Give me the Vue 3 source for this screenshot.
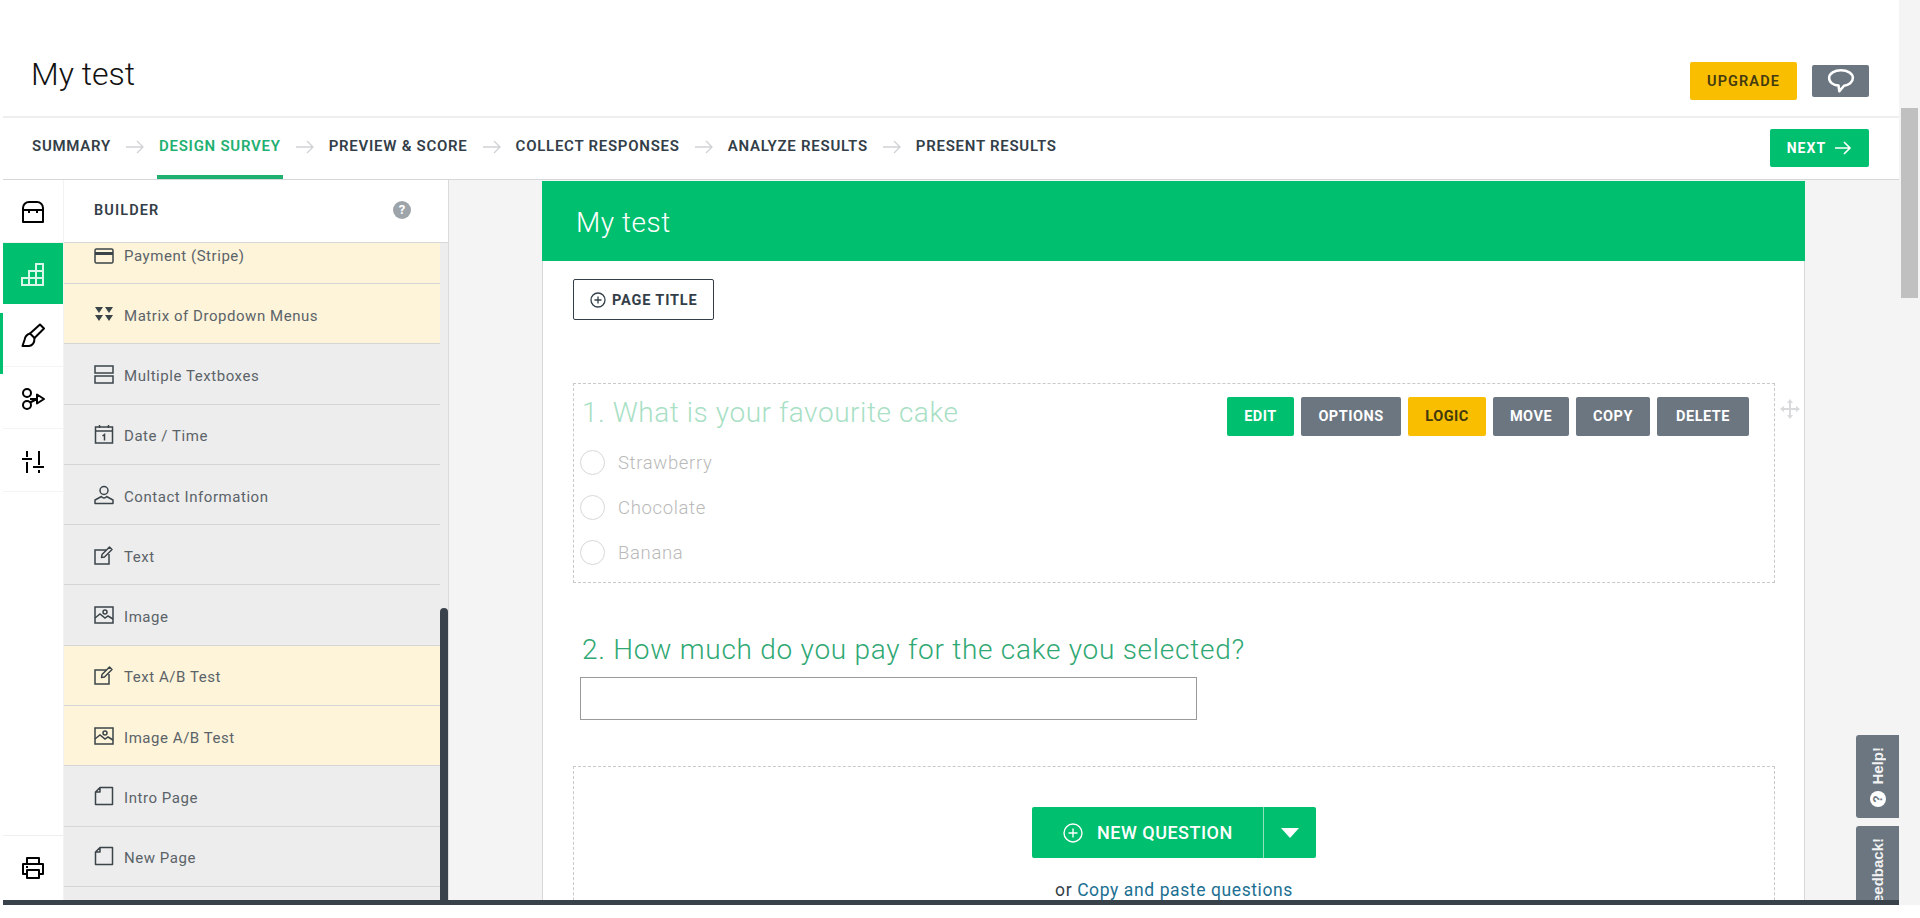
<script setup>
const rows = [
  { label: 'Payment (Stripe)', icon: 'card', paid: true, first: true },
  { label: 'Matrix of Dropdown Menus', icon: 'matrix', paid: true },
  { label: 'Multiple Textboxes', icon: 'boxes' },
  { label: 'Date / Time', icon: 'date' },
  { label: 'Contact Information', icon: 'contact' },
  { label: 'Text', icon: 'text' },
  { label: 'Image', icon: 'image' },
  { label: 'Text A/B Test', icon: 'text', paid: true },
  { label: 'Image A/B Test', icon: 'image', paid: true },
  { label: 'Intro Page', icon: 'page' },
  { label: 'New Page', icon: 'page' }
]
const steps = ['SUMMARY', 'DESIGN SURVEY', 'PREVIEW & SCORE', 'COLLECT RESPONSES', 'ANALYZE RESULTS', 'PRESENT RESULTS']
const actions = [
  { label: 'EDIT', kind: 'green', width: 67 },
  { label: 'OPTIONS', kind: 'grey', width: 100 },
  { label: 'LOGIC', kind: 'yellow', width: 78 },
  { label: 'MOVE', kind: 'grey', width: 76 },
  { label: 'COPY', kind: 'grey', width: 74 },
  { label: 'DELETE', kind: 'grey', width: 92 }
]
const answers = ['Strawberry', 'Chocolate', 'Banana']
</script>

<template>
  <div class="page">
    <div class="content">
      <header class="top">
        <h1>My test</h1>
        <div class="top-actions">
          <button class="upgrade">UPGRADE</button>
          <button class="chat">
            <svg width="28" height="26" viewBox="0 0 26 24" fill="none" stroke="#fff" stroke-width="2.400">
              <path d="M13 2c6 0 11 2.800 11 7.200 0 4-3.800 6.800-8.200 7.200L11.500 21.500l-.8-5.200C6 15.800 2 13.200 2 9.200 2 4.800 7 2 13 2z" stroke-linejoin="round" />
            </svg>
          </button>
        </div>
      </header>

      <nav class="steps">
        <template v-for="(step, i) in steps" :key="step">
          <svg v-if="i" class="step-arrow" width="20" height="14" viewBox="0 0 20 14" fill="none" stroke="#cfd2d3" stroke-width="1.300">
            <path d="M1 7h17M12 1l6 6-6 6" />
          </svg>
          <span class="step" :class="{ active: step === 'DESIGN SURVEY' }">{{ step }}</span>
        </template>
        <button class="next">
          NEXT
          <svg width="18" height="14" viewBox="0 0 18 14" fill="none" stroke="#fff" stroke-width="1.600">
            <path d="M1 7h15M10 1l6 6-6 6" />
          </svg>
        </button>
      </nav>

      <main class="main">
        <aside class="rail">
          <div class="rail-item first">
            <svg width="24" height="24" viewBox="0 0 24 24" fill="none" stroke="#000" stroke-width="2">
              <path d="M2 22V8a6 6 0 0 1 6-6h8a6 6 0 0 1 6 6v14zM2 10h20M8 10v3M16 10v3" stroke-linejoin="round" />
            </svg>
          </div>
          <div class="rail-item on">
            <svg width="24" height="24" viewBox="0 0 24 24" fill="none" stroke="#d9f7e8" stroke-width="2">
              <path d="M1 23v-7h7V9h7V2h7v21zM1 16h21M8 9h14M8 16v7M15 9v14" />
            </svg>
          </div>
          <div class="rail-item marked">
            <svg width="24" height="24" viewBox="0 0 24 24" fill="none" stroke="#000" stroke-width="2">
              <path d="M19 1.500 23 5.500 13.500 15 9 10.500z" stroke-linejoin="round" />
              <path d="M9 10.500C5 11.500 4 14 3.500 17L1.500 23H8c4-.5 5.500-4 5.500-8" stroke-linejoin="round" />
            </svg>
          </div>
          <div class="rail-item logic">
            <svg width="24" height="24" viewBox="0 0 24 24" fill="none" stroke="#000" stroke-width="2">
              <circle cx="6" cy="6" r="4" /><circle cx="6" cy="18" r="4" />
              <path d="M9 15.500 16 12H9M16 7.500v9l7-4.500z" stroke-linejoin="round" />
            </svg>
          </div>
          <div class="rail-item sliders">
            <svg width="24" height="24" viewBox="0 0 24 24" fill="none" stroke="#000" stroke-width="2">
              <path d="M6 1v6M6 12v11M18 1v14M18 20v3M1 9h10M12 17h11" />
            </svg>
          </div>
          <div class="rail-print">
            <svg width="24" height="24" viewBox="0 0 24 24" fill="none" stroke="#000" stroke-width="2">
              <path d="M6 8V2h12v6M6 18H2V8h20v10h-4M6 14h12v8H6z" stroke-linejoin="round" />
              <path d="M5 11h2" />
            </svg>
          </div>
        </aside>

        <section class="builder">
          <div class="builder-head">
            <span>BUILDER</span>
            <i class="hint">?</i>
          </div>
          <div class="builder-list">
            <div v-for="row in rows" :key="row.label" class="row" :class="{ paid: row.paid, first: row.first }">
              <svg class="row-icon" width="20" height="20" viewBox="0 0 20 20" fill="none" stroke="#3b4449" stroke-width="1.500">
                <template v-if="row.icon === 'card'">
                  <rect x="1" y="3" width="18" height="14" rx="1.500" /><path d="M1 7.500h18" stroke-width="3" />
                </template>
                <template v-else-if="row.icon === 'matrix'">
                  <path d="M1 3h8L5 9zM11 3h8l-4 6zM1 11h8l-4 6zM11 11h8l-4 6z" fill="#3b4449" stroke="none" />
                </template>
                <template v-else-if="row.icon === 'boxes'">
                  <rect x="1" y="2" width="18" height="7" /><rect x="1" y="12" width="18" height="7" />
                </template>
                <template v-else-if="row.icon === 'date'">
                  <rect x="1.500" y="3" width="17" height="16" /><path d="M1.500 7h17M5.500 1v3M14.500 1v3M8.500 12l2-1.500v6" />
                </template>
                <template v-else-if="row.icon === 'contact'">
                  <circle cx="10" cy="5.500" r="4" /><path d="M1 18.500h18V15l-6.500-3.500c-1 2-4 2-5 0L1 15z" stroke-linejoin="round" />
                </template>
                <template v-else-if="row.icon === 'text'">
                  <path d="M12 5H1v14h14V9" /><path d="m7.500 12.500.5-3L15.500 2l2.500 2.500L10.500 12z" stroke-linejoin="round" />
                </template>
                <template v-else-if="row.icon === 'image'">
                  <rect x="1" y="2" width="18" height="16" /><circle cx="11" cy="7" r="2" /><path d="m1 13 5-4 5 4 3-2 5 3" />
                </template>
                <template v-else>
                  <path d="M6 1.500h12.500v17h-17V6zM1.500 6H6V1.500" stroke-linejoin="round" />
                </template>
              </svg>
              <span>{{ row.label }}</span>
            </div>
          </div>
          <div class="builder-track"><div class="builder-thumb"></div></div>
        </section>

        <section class="stage">
          <div class="card">
            <div class="card-head">My test</div>
            <div class="card-body">
              <button class="page-title">
                <svg width="16" height="16" viewBox="0 0 16 16" fill="none" stroke="#333e48" stroke-width="1.300">
                  <circle cx="8" cy="8" r="7" /><path d="M8 4.500v7M4.500 8h7" />
                </svg>
                PAGE TITLE
              </button>

              <div class="q1">
                <div class="q1-top">
                  <h2>1. What is your favourite cake</h2>
                  <div class="q-actions">
                    <button v-for="a in actions" :key="a.label" class="act" :class="a.kind" :style="{ width: a.width + 'px' }">{{ a.label }}</button>
                  </div>
                </div>
                <label v-for="a in answers" :key="a" class="answer"><i></i>{{ a }}</label>
                <svg class="mover" width="20" height="20" viewBox="0 0 20 20" fill="#d8dadb">
                  <path d="M0 10l4-3v2h5V4H7l3-4 3 4h-2v5h5V7l4 3-4 3v-2h-5v5h2l-3 4-3-4h2v-5H4v2z" />
                </svg>
              </div>

              <div class="q2">
                <h2>2. How much do you pay for the cake you selected?</h2>
                <div class="q2-input"></div>
              </div>

              <div class="add-box">
                <div class="add-btn">
                  <span class="add-main">
                    <svg width="20" height="20" viewBox="0 0 20 20" fill="none" stroke="#fff" stroke-width="1.400">
                      <circle cx="10" cy="10" r="9" /><path d="M10 5.500v9M5.500 10h9" />
                    </svg>
                    NEW QUESTION
                  </span>
                  <span class="add-caret"><i></i></span>
                </div>
                <p class="paste">or <a>Copy and paste questions</a></p>
              </div>
            </div>
          </div>
        </section>
      </main>

      <div class="tab help"><span>Help!</span><i>?</i></div>
      <div class="tab feedback"><span>Feedback!</span></div>
      <div class="bar"></div>
    </div>
    <div class="scroll"><div class="scroll-thumb"></div></div>
  </div>
</template>

<style>
html, body { margin: 0; background: #fff; overflow: hidden; }
</style>

<style scoped>
.page {
  display: flex;
  width: 1920px;
  height: 918px;
  overflow: hidden;
  background: #fff;
  color: #333e48;
  font-family: Roboto, "Noto Sans", sans-serif;
}
.content {
  position: relative;
  width: 1899px;
  display: flex;
  flex-direction: column;
  padding-left: 3px;
  box-sizing: border-box;
  height: 905px;
}
button { font-family: inherit; border: 0; cursor: pointer; }

.top {
  height: 116px;
  flex: none;
  display: flex;
  justify-content: space-between;
  align-items: flex-start;
  border-bottom: 2px solid #eeeeee;
  margin-bottom: -1px;
}
.top h1 {
  margin: 52px 0 0 28px;
  font-size: 32px;
  line-height: 44px;
  font-weight: 300;
  color: #111;
}
.top-actions {
  display: flex;
  align-items: center;
  gap: 15px;
  margin: 62px 30px 0 0;
}
.upgrade {
  width: 107px;
  height: 38px;
  background: #f9be00;
  border-radius: 2px;
  font-size: 14.500px;
  font-weight: 600;
  letter-spacing: 1.100px;
  color: #433a10;
}
.chat {
  width: 57px;
  height: 32px;
  background: #6b7680;
  border-radius: 2px;
  padding: 0;
  display: flex;
  align-items: center;
  justify-content: center;
}

.steps {
  height: 63px;
  flex: none;
  display: flex;
  align-items: flex-start;
  border-bottom: 1px solid #d5d7d8;
  box-sizing: border-box;
  padding-left: 27px;
}
.step {
  padding: 19px 2px 19px;
  line-height: 20px;
  font-size: 15px;
  font-weight: 600;
  letter-spacing: 0.740px;
  color: #333e48;
  border-bottom: 4px solid transparent;
  white-space: nowrap;
}
.step.active { color: #1fb072; border-bottom-color: #1fb072; }
.step-arrow { margin: 23px 12px 0; flex: none; }
.next {
  margin: 12px 30px 0 auto;
  width: 99px;
  height: 38px;
  background: #00bf6f;
  border-radius: 2px;
  color: #fff;
  font-size: 14px;
  font-weight: 700;
  letter-spacing: 1.100px;
  display: flex;
  align-items: center;
  justify-content: center;
  gap: 8px;
}

.main {
  flex: 1;
  min-height: 0;
  display: flex;
  overflow: hidden;
  margin-left: -3px;
}

.rail {
  width: 63px;
  flex: none;
  display: flex;
  flex-direction: column;
  padding: 2px 0 0 3px;
  box-sizing: border-box;
}
.rail-item {
  height: 62px;
  flex: none;
  display: flex;
  align-items: center;
  justify-content: center;
  border-bottom: 1px solid #f4f4f4;
  box-sizing: border-box;
  position: relative;
}
.rail-item.first { height: 61px; }
.rail-item.on { height: 61px; background: #00bf6f; border-bottom: 0; }
.rail-item.marked { height: 63px; }
.rail-item.logic { padding-top: 2px; }
.rail-item.sliders { height: 63px; padding-top: 3px; }
.rail-item.marked::before {
  content: "";
  position: absolute;
  left: -3px;
  top: 9px;
  height: 61px;
  width: 3px;
  background: #00bf6f;
}
.rail-print {
  margin-top: auto;
  height: 65px;
  border-top: 1px solid #eeeeee;
  display: flex;
  align-items: center;
  justify-content: center;
  box-sizing: border-box;
}

.builder {
  width: 386px;
  flex: none;
  position: relative;
  display: flex;
  flex-direction: column;
  border-right: 1px solid #d8dadb;
  box-sizing: border-box;
  background: #ededed;
  overflow: hidden;
  border-left: 1px solid #f3f3f3;
}
.builder-head {
  height: 63px;
  flex: none;
  background: #fff;
  border-bottom: 1px solid #d5d7d8;
  box-sizing: border-box;
  display: flex;
  align-items: center;
  justify-content: space-between;
  padding: 0 37px 2px 30px;
  font-size: 14.500px;
  font-weight: 600;
  letter-spacing: 1.100px;
}
.hint {
  width: 18px;
  height: 18px;
  border-radius: 50%;
  background: #9da5ab;
  color: #fff;
  font-style: normal;
  font-size: 13px;
  font-weight: 700;
  text-align: center;
  line-height: 18px;
  letter-spacing: 0;
}
.builder-list { width: 376px; flex: 1; min-height: 0; overflow: hidden; }
.row {
  height: 60.300px;
  box-sizing: border-box;
  display: flex;
  align-items: center;
  gap: 10px;
  padding: 0 0 0 30px;
  border-bottom: 1px solid #d5d5d5;
  font-size: 15px;
  letter-spacing: 0.550px;
  color: #5b6369;
}
.row span { position: relative; top: 2px; }
.row.paid { background: #fdf4d9; }
.row.first { height: 41px; padding-bottom: 14px; }
.row.first span { top: 0; }
.row-icon { flex: none; }
.builder-track {
  position: absolute;
  right: 0;
  top: 428px;
  bottom: 0;
  width: 8px;
}
.builder-thumb {
  height: 100%;
  background: #39424a;
  border-radius: 4px 4px 0 0;
}

.stage {
  flex: 1;
  min-width: 0;
  background: #f4f4f4;
  padding: 1px 93px 0 93px;
  overflow: hidden;
}
.card {
  width: 1263px;
  background: #fff;
  border-left: 1px solid #d5d7d8;
  border-right: 1px solid #d5d7d8;
  box-sizing: border-box;
  height: 900px;
}
.card-head {
  margin: 0 -1px;
  height: 80px;
  background: #00bf6f;
  color: #fff;
  padding-left: 34px;
  font-size: 28px;
  font-weight: 300;
  line-height: 83px;
  letter-spacing: 0.550px;
}
.card-body { padding: 18px 30px 0; }
.page-title {
  display: flex;
  align-items: center;
  gap: 6px;
  width: 141px;
  height: 41px;
  padding: 1px 0 0 16px;
  background: #fff;
  border: 1px solid #333e48;
  border-radius: 2px;
  color: #333e48;
  font-size: 14.500px;
  font-weight: 700;
  letter-spacing: 0.850px;
  box-sizing: border-box;
}
.q1 {
  margin-top: 63px;
  width: 1202px;
  height: 200px;
  border: 1px dashed #c9c9c9;
  box-sizing: border-box;
  position: relative;
  padding: 13px 6px 0 8px;
}
.q1-top {
  display: flex;
  justify-content: space-between;
  height: 43px;
}
.q1 h2, .q2 h2 {
  margin: 0;
  font-size: 28px;
  line-height: 32px;
  font-weight: 300;
  letter-spacing: 0.550px;
}
.q1 h2 { color: #a8dfc5; }
.q2 h2 { color: #2fa873; letter-spacing: 0.740px; }
.q-actions {
  display: flex;
  gap: 7px;
  margin-right: 19px;
}
.act {
  height: 39px;
  border-radius: 2px;
  padding: 0;
  font-size: 14.500px;
  font-weight: 700;
  letter-spacing: 0.500px;
  color: #fff;
}
.act.green { background: #00bf6f; }
.act.grey { background: #6b7680; }
.act.yellow { background: #f9be00; color: #43390c; }
.answer {
  display: flex;
  align-items: center;
  gap: 13px;
  height: 45px;
  margin-left: -2px;
  font-size: 18.500px;
  font-weight: 300;
  letter-spacing: 0.650px;
  color: #b9b9b9;
}
.answer i {
  width: 25px;
  height: 25px;
  border: 1px solid #d8d8d8;
  border-radius: 50%;
  box-sizing: border-box;
}
.mover {
  position: absolute;
  right: -26px;
  top: 15px;
}
.q2 { margin-top: 51px; padding-left: 9px; }
.q2-input {
  width: 617px;
  height: 43px;
  border: 1px solid #9a9a9a;
  box-sizing: border-box;
  margin: 11px 0 0 -2px;
}
.add-box {
  margin-top: 46px;
  width: 1202px;
  height: 200px;
  border: 1px dashed #c9c9c9;
  box-sizing: border-box;
  display: flex;
  flex-direction: column;
  align-items: center;
  padding-top: 40px;
}
.add-btn {
  display: flex;
  height: 51px;
  border-radius: 2px;
  overflow: hidden;
  background: #00bf6f;
  color: #fff;
}
.add-main {
  width: 232px;
  display: flex;
  align-items: center;
  gap: 14px;
  padding-left: 31px;
  box-sizing: border-box;
  font-size: 18px;
  font-weight: 500;
  letter-spacing: 0.500px;
  border-right: 1px solid #8fe0bb;
}
.add-caret {
  width: 52px;
  display: flex;
  align-items: center;
  justify-content: center;
}
.add-caret i {
  border-left: 9px solid transparent;
  border-right: 9px solid transparent;
  border-top: 10px solid #fff;
}
.paste {
  margin: 21px 0 0;
  font-size: 17.500px;
  line-height: 22px;
  letter-spacing: 0.600px;
  color: #333e48;
}
.paste a { color: #1b6f92; }

.tab {
  position: absolute;
  right: 0;
  width: 43px;
  background: #6b7680;
  border-radius: 3px 0 0 3px;
  color: #f2f2f2;
  font-family: "Liberation Sans", Arial, sans-serif;
  font-size: 15px;
  font-weight: 700;
  display: flex;
  flex-direction: column;
  align-items: center;
  box-sizing: border-box;
}
.tab span { writing-mode: vertical-rl; transform: rotate(180deg); }
.help { top: 735px; height: 83px; padding-top: 12px; gap: 6px; }
.help i {
  width: 16px;
  height: 16px;
  border-radius: 50%;
  background: #fff;
  color: #6b7680;
  font-style: normal;
  font-size: 12px;
  line-height: 16px;
  text-align: center;
  transform: rotate(-90deg);
}
.feedback { top: 826px; height: 74px; padding-top: 12px; overflow: hidden; border-radius: 3px 0 0 0; }
.feedback span { white-space: nowrap; }
.bar {
  flex: none;
  height: 5px;
  background: #39424a;
  position: relative;
}
.scroll {
  width: 21px;
  height: 905px;
  flex: none;
  background: #f4f4f4;
  position: relative;
}
.scroll-thumb {
  position: absolute;
  left: 2px;
  right: 2px;
  top: 108px;
  height: 190px;
  background: #c0c0c0;
}
</style>
